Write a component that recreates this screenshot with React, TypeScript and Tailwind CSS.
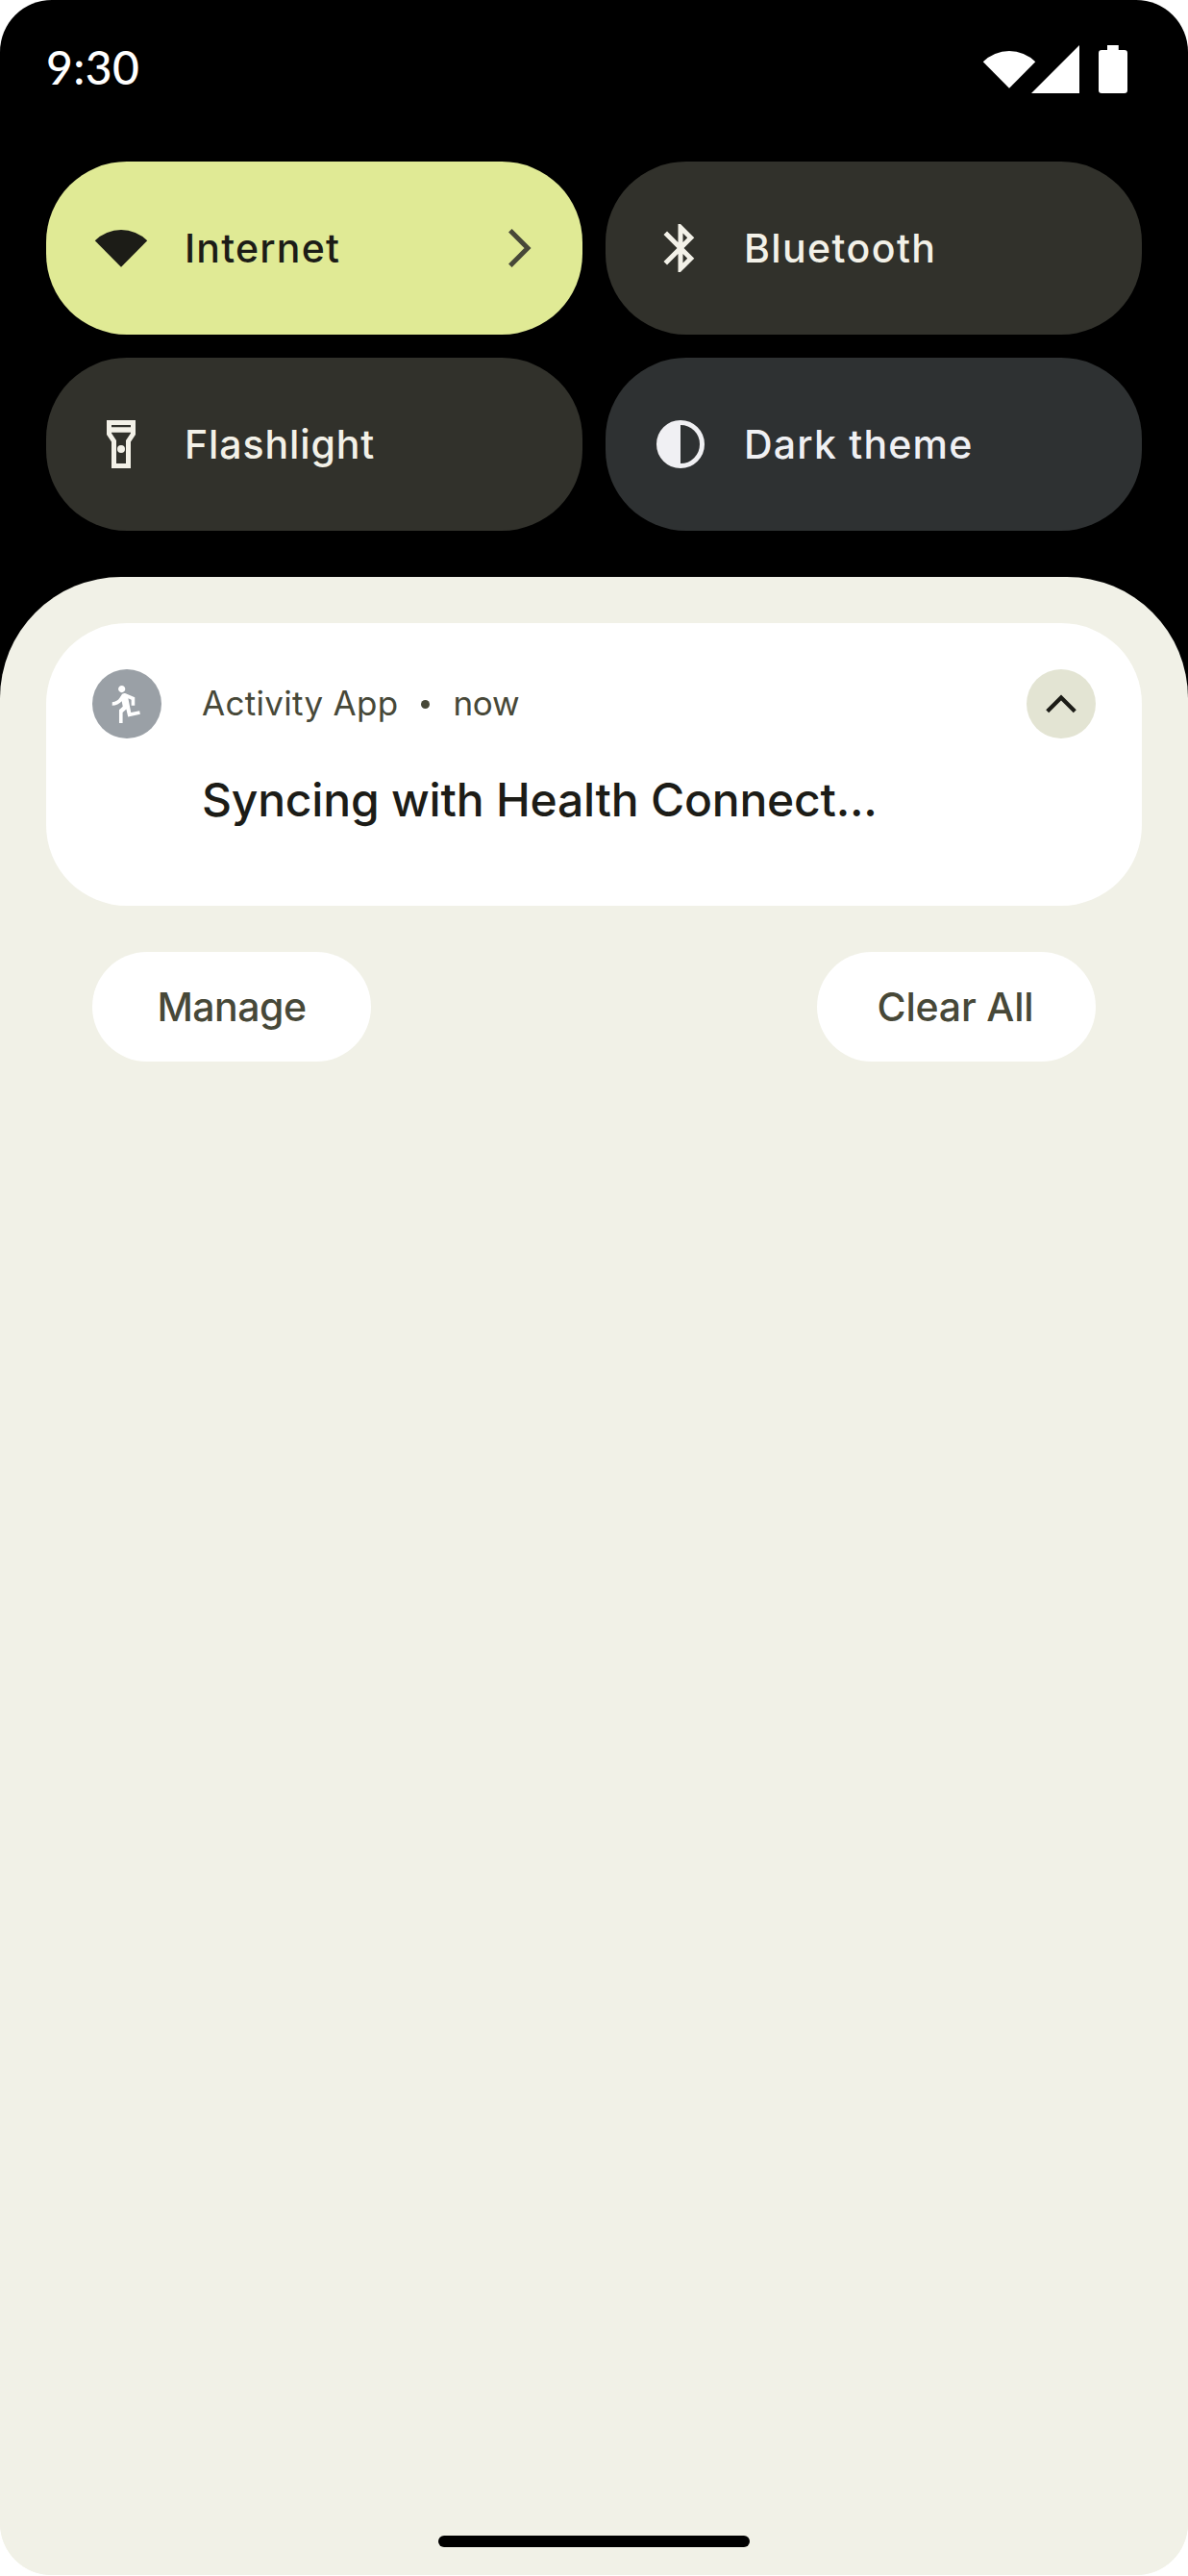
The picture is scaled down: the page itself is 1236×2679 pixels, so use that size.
import React from 'react';

interface Tile {
  label: string;
  color: string;
  tracking: string;
  icon: React.ReactNode;
  expandable?: boolean;
}

const WifiIcon = () => (
  <svg className="w-15 h-15 shrink-0" fill="currentColor" viewBox="0 0 24 24">
    <path d="M1.1 8.9A15.5 15.5 0 0 1 22.9 8.9L12 19.9Z" />
  </svg>
);

const BluetoothIcon = () => (
  <svg className="w-15 h-15 shrink-0" fill="currentColor" viewBox="0 0 24 24">
    <path d="M17.71 7.71L12 2h-1v7.59L6.41 5 5 6.41 10.59 12 5 17.59 6.41 19 11 14.41V22h1l5.71-5.71-4.3-4.29 4.3-4.29zM13 5.83l1.88 1.88L13 9.59V5.83zm1.88 10.46L13 18.17v-3.76l1.88 1.88z" />
  </svg>
);

const FlashlightIcon = () => (
  <svg className="w-15 h-15 shrink-0" fill="currentColor" viewBox="0 0 24 24">
    <path fillRule="evenodd" d="M18 2H6v6l2 3v11h8V11l2-3V2zM16 4v.9H8V4h8zM14 10.4V20h-4v-9.6L8 7.4V7.1h8v.3l-2 3z" />
    <circle cx="12" cy="14" r="1.6" />
  </svg>
);

const ContrastIcon = () => (
  <svg className="w-15 h-15 shrink-0" viewBox="0 0 24 24">
    <circle cx="12" cy="12" r="9" fill="none" stroke="currentColor" strokeWidth={2} />
    <path fill="currentColor" d="M12 3v18a9 9 0 0 1 0-18z" />
  </svg>
);

const tiles: Tile[] = [
  { label: 'Internet', color: 'bg-[#e0ea95] text-[#1c1c17]', tracking: 'tracking-[1.2px]', icon: <WifiIcon />, expandable: true },
  { label: 'Bluetooth', color: 'bg-[#31312b] text-[#f3f1e8]', tracking: 'tracking-[1.4px]', icon: <BluetoothIcon /> },
  { label: 'Flashlight', color: 'bg-[#31312b] text-[#f3f1e8]', tracking: 'tracking-[0.9px]', icon: <FlashlightIcon /> },
  { label: 'Dark theme', color: 'bg-[#2e3132] text-[#f0f0f3]', tracking: 'tracking-[1.2px]', icon: <ContrastIcon /> },
];

const StatusBar = () => (
  <div className="h-[168px] px-12 pt-[42px] flex items-start justify-between text-white">
    <span className="h-15 leading-[56px] text-[48px] font-medium tracking-[0.4px] font-['Lato',sans-serif]">9:30</span>
    <div className="flex">
      <WifiIcon />
      <svg className="w-15 h-15 -ml-3" fill="currentColor" viewBox="0 0 24 24">
        <path d="M22 2v20H2z" />
      </svg>
      <svg className="w-15 h-15" fill="currentColor" viewBox="0 0 24 24">
        <path d="M9.6 2h4.7v2h2.4q1.3 0 1.3 1.3v15.4q0 1.3-1.3 1.3H7.3Q6 22 6 20.7V5.3Q6 4 7.3 4h2.3z" />
      </svg>
    </div>
  </div>
);

const QuickTile: React.FC<{ tile: Tile }> = ({ tile }) => (
  <button className={`h-[180px] rounded-[84px] pl-12 pr-[42px] flex items-center gap-9 ${tile.color}`}>
    {tile.icon}
    <span className={`grow text-left text-[41px] leading-[60px] font-medium ${tile.tracking}`}>{tile.label}</span>
    {tile.expandable && (
      <svg className="w-12 h-12 text-[#474838]" fill="none" stroke="currentColor" strokeWidth={5} viewBox="0 0 48 48">
        <path d="M14.8 5.8L33 24 14.8 42.2" />
      </svg>
    )}
  </button>
);

const NotificationCard = () => (
  <div className="h-[294px] rounded-[84px] bg-white p-12">
    <div className="flex items-center h-[72px]">
      <svg className="w-[72px] h-[72px] shrink-0" viewBox="0 0 72 72">
        <circle cx="36" cy="36" r="36" fill="#9aa0a6" />
        <g transform="translate(55.1 14.3) scale(-1.81 1.81)" fill="white">
          <path d="M13.49 5.48c1.1 0 2-.9 2-2s-.9-2-2-2-2 .9-2 2 .9 2 2 2zm-3.6 13.9l1-4.4 2.1 2v6h2v-7.5l-2.1-2 .6-3c1.3 1.5 3.3 2.5 5.5 2.5v-2c-1.9 0-3.5-1-4.3-2.4l-1-1.6c-.4-.6-1-1-1.7-1-.3 0-.5.1-.8.1l-5.2 2.2v4.7h2v-3.4l1.8-.7-1.6 8.1-4.9-1-.4 2 7 1.4z" />
        </g>
      </svg>
      <div className="ml-[42px] grow flex items-center text-[35px] leading-[54px] text-[#474838]">
        <span className="tracking-[0.3px] pb-0.5">Activity App</span>
        <span className="w-[9px] h-[9px] rounded-full bg-[#474838] ml-6 mr-6" />
        <span className="tracking-[-0.3px] pb-0.5">now</span>
      </div>
      <button className="w-[72px] h-[72px] rounded-full bg-[#e3e4d3]">
        <svg className="w-full h-full" fill="none" stroke="#1c1c17" strokeWidth={4.2} viewBox="0 0 72 72">
          <path d="M21.7 43.7L36 29.4l14.3 14.3" />
        </svg>
      </button>
    </div>
    <h3 className="ml-[114px] mt-7 text-[48px] leading-[72px] font-medium tracking-[-0.21px] text-[#1c1c17]">
      Syncing with Health Connect...
    </h3>
  </div>
);

export default function App() {
  return (
    <div className="w-[1236px] h-[2679px] bg-white font-['Inter',sans-serif]">
      <div className="h-[2678px] rounded-[54px] overflow-hidden bg-linear-to-b from-black from-50% to-[#f1f1e7] to-50% flex flex-col">
        <StatusBar />
        <div className="grid grid-cols-2 gap-6 px-12">
          {tiles.map((tile) => (
            <QuickTile key={tile.label} tile={tile} />
          ))}
        </div>
        <div className="grow mt-12 rounded-t-[126px] bg-[#f1f1e7] px-12 pt-12 pb-[29px] flex flex-col">
          <NotificationCard />
          <div className="mt-12 px-12 flex justify-between text-[41px] font-medium text-[#474838]">
            <button className="w-[290px] h-[114px] pt-0.5 rounded-full bg-white tracking-[-0.5px]">Manage</button>
            <button className="w-[290px] h-[114px] pt-0.5 pr-0.5 rounded-full bg-white tracking-[-0.2px]">Clear All</button>
          </div>
          <div className="mt-auto mx-auto w-[324px] h-3 rounded-full bg-black" />
        </div>
      </div>
    </div>
  );
}
